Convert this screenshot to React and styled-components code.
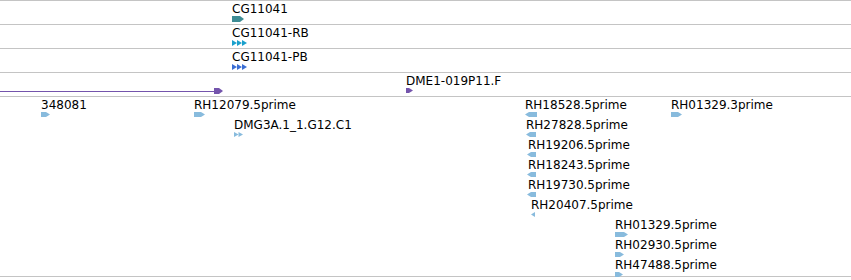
import React from 'react';
import styled, { createGlobalStyle } from 'styled-components';

const GlobalStyle = createGlobalStyle`
    html, body {
        margin: 0;
        padding: 0;
        background: #fff;
    }
    body {
        font-family: "DejaVu Sans", "Liberation Sans", sans-serif;
        font-size: 12px;
        color: #000;
    }
`;

const geneTracks = [
    { label: "CG11041", x: 232, w: 12, h: 6, shape: "arrow", color: "#3d8c94" },
    { label: "CG11041-RB", x: 232, w: 15, h: 6, shape: "chevrons", count: 3, color: "#1aa0cc" },
    { label: "CG11041-PB", x: 232, w: 15, h: 6, shape: "chevrons", count: 3, color: "#3a6ed4" },
];

const estFeatures = [
    { label: "348081", x: 41, row: 0, w: 9, shape: "arrow" },
    { label: "RH12079.5prime", x: 194, row: 0, w: 11, shape: "arrow" },
    { label: "DMG3A.1_1.G12.C1", x: 234, row: 1, w: 9, shape: "chevrons", count: 2 },
    { label: "RH18528.5prime", x: 525, row: 0, w: 12, shape: "left" },
    { label: "RH01329.3prime", x: 671, row: 0, w: 11, shape: "arrow" },
    { label: "RH27828.5prime", x: 526, row: 1, w: 10, shape: "left" },
    { label: "RH19206.5prime", x: 528, row: 2, w: 9, shape: "left", gx: 527 },
    { label: "RH18243.5prime", x: 528, row: 3, w: 9, shape: "left", gx: 527 },
    { label: "RH19730.5prime", x: 528, row: 4, w: 9, shape: "left", gx: 527 },
    { label: "RH20407.5prime", x: 531, row: 5, w: 4, shape: "left" },
    { label: "RH01329.5prime", x: 615, row: 6, w: 13, shape: "arrow" },
    { label: "RH02930.5prime", x: 615, row: 7, w: 9, shape: "arrow" },
    { label: "RH47488.5prime", x: 615, row: 8, w: 8, shape: "arrow" },
];

function Glyph({ shape, w, h, color, count }) {
    let pts;
    if (shape === "chevrons") {
        const step = w / count;
        return (
            <svg width={w} height={h} style={{ display: 'block' }}>
                {Array.from({ length: count }).map((_, i) => (
                    <polygon key={i} points={`${i * step},0 ${i * step + step},${h / 2} ${i * step},${h}`} fill={color} />
                ))}
            </svg>
        );
    }
    if (shape === "left") {
        pts = w <= 4
            ? [[w, 0], [w, h], [0, h / 2]]
            : [[4, 0], [w, 0], [w, h], [4, h], [0, h / 2]];
    } else {
        pts = [[0, 0], [w - 4, 0], [w, h / 2], [w - 4, h], [0, h]];
    }
    return (
        <svg width={w} height={h} style={{ display: 'block' }}>
            <polygon points={pts.map(p => p.join(',')).join(' ')} fill={color} />
        </svg>
    );
}

function Feature({ label, x, top = 0, w, h = 5, shape, count, color = "#88bbdd", gx }) {
    return (
        <FeatureBox style={{ left: x, top }}>
            <Label>{label}</Label>
            <GlyphSlot $shift={gx !== undefined ? gx - x : 0}>
                <Glyph shape={shape} w={w} h={h} color={color} count={count} />
            </GlyphSlot>
        </FeatureBox>
    );
}

function App() {
    return (
        <Browser>
            <GlobalStyle />
            {geneTracks.map((t, i) => (
                <Track key={i} $h={23}>
                    <Feature {...t} />
                </Track>
            ))}
            <Track $h={23}>
                <ReadLine width="224" height="23">
                    <line x1="0" y1="18.5" x2="215" y2="18.5" stroke="#7454ac" strokeWidth="1" />
                    <polygon points="214,15 219,15 223,18 219,21 214,21" fill="#7454ac" />
                </ReadLine>
                <Feature label="DME1-019P11.F" x={406} w={7} h={5} shape="arrow" color="#7454ac" />
            </Track>
            <Track $h={179}>
                {estFeatures.map((f, i) => (
                    <Feature key={i} {...f} top={f.row * 20} />
                ))}
            </Track>
        </Browser>
    );
}

export default App;

const Browser = styled.div`
    width: 851px;
    border-top: 1px solid #c4c4c4;
`;

const Track = styled.div`
    position: relative;
    height: ${p => p.$h}px;
    border-bottom: 1px solid #c4c4c4;
`;

const FeatureBox = styled.div`
    position: absolute;
    display: flex;
    flex-direction: column;
    white-space: nowrap;
`;

const Label = styled.span`
    display: block;
    height: 14px;
    padding-top: 1px;
    line-height: 14px;
    font-size: 12px;
`;

const GlyphSlot = styled.div`
    margin-left: ${p => p.$shift}px;
`;

const ReadLine = styled.svg`
    position: absolute;
    left: 0;
    top: 0;
    display: block;
`;
